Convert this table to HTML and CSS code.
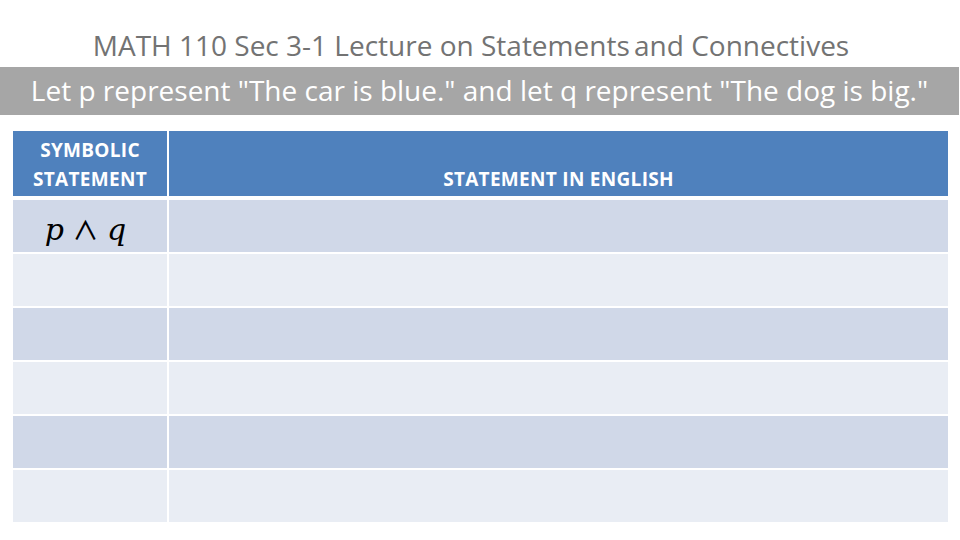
FILE: index.html
```html
<!DOCTYPE html>
<html lang="en">
<head>
<meta charset="utf-8">
<title>MATH 110 Sec 3-1</title>
<link rel="stylesheet" href="styles.css">
</head>
<body>
<div class="slide">
  <h1 class="title">MATH 110 Sec 3-1 Lecture on Statements<span class="tight"> </span>and Connectives</h1>
  <div class="banner">Let p represent "The car is blue." and let q represent "The dog is big."</div>
  <div class="table">
    <div class="cell head c1">SYMBOLIC<br>STATEMENT</div>
    <div class="cell head c2">STATEMENT IN ENGLISH</div>
    <div class="cell odd c1"><span class="math"><i>p</i> <span class="op">∧</span> <i>q</i></span></div>
    <div class="cell odd c2"></div>
    <div class="cell even c1"></div>
    <div class="cell even c2"></div>
    <div class="cell odd c1"></div>
    <div class="cell odd c2"></div>
    <div class="cell even c1"></div>
    <div class="cell even c2"></div>
    <div class="cell odd c1"></div>
    <div class="cell odd c2"></div>
    <div class="cell even c1"></div>
    <div class="cell even c2"></div>
  </div>
</div>
</body>
</html>
```
FILE: styles.css
```css
html, body {
  margin: 0;
  padding: 0;
  background: #ffffff;
}
.slide {
  width: 960px;
  height: 540px;
  overflow: hidden;
  font-family: "Open Sans", "Liberation Sans", sans-serif;
  display: flex;
  flex-direction: column;
}
.title {
  margin: 0;
  padding-top: 28px;
  height: 39px;
  box-sizing: content-box;
  font-weight: 400;
  font-size: 28px;
  line-height: 34px;
  color: #737373;
  text-align: center;
  padding-right: 18px;
  letter-spacing: 0;
  white-space: nowrap;
}
.tight {
  letter-spacing: -3px;
}
.banner {
  width: 959px;
  height: 48px;
  background: #a6a6a6;
  color: #ffffff;
  font-size: 28px;
  line-height: 47px;
  text-align: center;
  letter-spacing: 0;
  white-space: nowrap;
}
.table {
  margin: 16px 0 0 13px;
  width: 935px;
  display: grid;
  grid-template-columns: 154px 779px;
  grid-template-rows: 67px repeat(6, 52px);
  column-gap: 2px;
  row-gap: 2px;
  background: #ffffff;
}
.cell.head {
  background: #4f81bd;
  color: #ffffff;
  font-weight: 700;
  font-size: 19px;
  line-height: 29px;
  letter-spacing: 0.3px;
  text-align: center;
  display: flex;
  align-items: flex-end;
  justify-content: center;
  padding-bottom: 2px;
  margin-bottom: 2px;
}
.cell.odd { background: #d0d8e8; }
.cell.even { background: #e9edf4; }
.math {
  display: block;
  text-align: center;
  font-family: "DejaVu Serif", "Liberation Serif", serif;
  font-size: 30px;
  line-height: 50px;
  padding-top: 5px;
  color: #000000;
  padding-right: 9px;
  word-spacing: -1px;
}
.math i { font-style: italic; }
.math .op {
  font-family: "Noto Sans CJK JP", "DejaVu Sans", sans-serif;
  font-weight: 500;
  font-size: 26px;
  line-height: 0;
}
```
